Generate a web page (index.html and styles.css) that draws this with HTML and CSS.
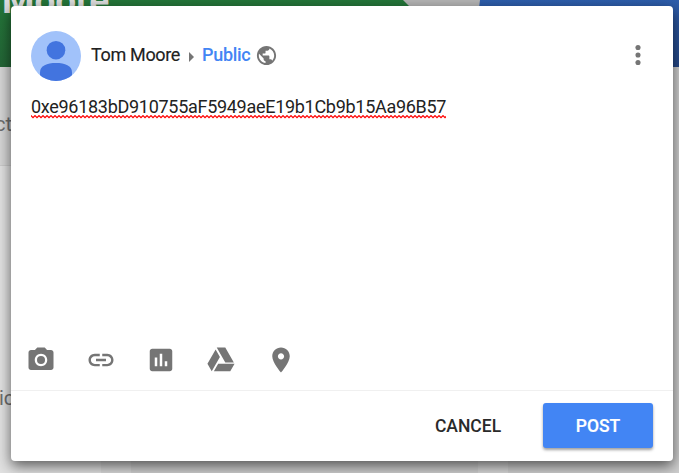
FILE: index.html
```html
<!DOCTYPE html>
<html lang="en">
<head>
<meta charset="utf-8">
<title>New post</title>
<link rel="stylesheet" href="styles.css">
</head>
<body>
<div class="backdrop" aria-hidden="true">
  <div class="banner">
    <svg class="banner-art" width="679" height="67" viewBox="0 0 679 67">
      <defs>
        <linearGradient id="green" x1="0" y1="0" x2="0" y2="1"><stop offset="0" stop-color="#247639"/><stop offset="1" stop-color="#236536"/></linearGradient>
        <linearGradient id="blue" x1="0" y1="0" x2="0" y2="1"><stop offset="0" stop-color="#2d5dab"/><stop offset="1" stop-color="#254888"/></linearGradient>
      </defs>
      <rect width="679" height="67" fill="#b4b4b4"/>
      <path d="M0 0H403L470 67H0Z" fill="url(#green)"/>
      <path d="M480 0H679V67H472Z" fill="url(#blue)"/>
    </svg>
    <span class="banner-name">Moore</span>
  </div>
  <div class="columns">
    <div class="column side">
      <div class="tab">ct</div>
      <div class="card">ic</div>
    </div>
    <div class="gutter"></div>
    <div class="column"></div>
    <div class="gutter"></div>
    <div class="column"></div>
  </div>
</div>
<main class="dialog">
  <header class="head">
    <svg class="avatar" width="50" height="50" viewBox="0 0 50 50">
      <defs><clipPath id="round"><circle cx="25" cy="25" r="25"/></clipPath></defs>
      <g clip-path="url(#round)"><rect width="50" height="50" fill="#a1c2fa"/><circle cx="25" cy="19.2" r="9.3" fill="#4274df"/><path d="M9 50V41.5C9 34.5 16 32 25 32S41 34.5 41 41.5V50Z" fill="#4274df"/></g>
    </svg>
    <span class="author">Tom Moore</span>
    <svg class="caret" width="5" height="10" viewBox="0 0 5 10"><path d="M0 0L5 5L0 10Z" fill="#757575"/></svg>
    <span class="audience">Public</span>
    <svg class="globe" width="23" height="23" viewBox="0 0 24 24"><path fill="#757575" d="M12 2C6.480 2 2 6.480 2 12s4.480 10 10 10 10-4.480 10-10S17.520 2 12 2zm-1 17.930c-3.950-.49-7-3.850-7-7.930 0-.62.080-1.210.21-1.790L9 15v1c0 1.100.9 2 2 2v1.930zm6.900-2.540c-.26-.81-1-1.390-1.900-1.390h-1v-3c0-.55-.45-1-1-1H8v-2h2c.55 0 1-.45 1-1V7h2c1.100 0 2-.9 2-2v-.41c2.930 1.190 5 4.060 5 7.410 0 2.080-.8 3.970-2.100 5.390z"/></svg>
    <svg class="more" width="30" height="30" viewBox="0 0 24 24" fill="#757575"><circle cx="12" cy="6" r="2.050"/><circle cx="12" cy="12" r="2.050"/><circle cx="12" cy="18" r="2.050"/></svg>
  </header>
  <div class="body">
    <div class="entry">0xe96183bD910755aF5949aeE19b1Cb9b15Aa96B57
      <svg class="squiggle" width="415" height="4"><defs><pattern id="wave" width="4" height="4" patternUnits="userSpaceOnUse"><path d="M-1 1.500L0 .7L2 2.700L4 .7L5 1.700" fill="none" stroke="#f00" stroke-width="1.300"/></pattern></defs><rect width="415" height="4" fill="url(#wave)"/></svg>
    </div>
  </div>
  <div class="tools">
    <svg viewBox="0 0 24 24"><circle cx="12" cy="12" r="3.200"/><path d="M9 2L7.170 4H4c-1.100 0-2 .9-2 2v12c0 1.100.9 2 2 2h16c1.100 0 2-.9 2-2V6c0-1.100-.9-2-2-2h-3.170L15 2H9zm3 15c-2.760 0-5-2.240-5-5s2.240-5 5-5 5 2.240 5 5-2.240 5-5 5z"/></svg>
    <svg viewBox="0 0 24 24"><path d="M3.900 12c0-1.710 1.390-3.100 3.100-3.100h4V7H7c-2.760 0-5 2.240-5 5s2.240 5 5 5h4v-1.900H7c-1.710 0-3.100-1.390-3.100-3.100zM8 13h8v-2H8v2zm9-6h-4v1.900h4c1.710 0 3.100 1.390 3.100 3.100s-1.390 3.100-3.100 3.100h-4V17h4c2.760 0 5-2.240 5-5s-2.240-5-5-5z"/></svg>
    <svg viewBox="0 0 24 24"><path d="M19 3H5c-1.100 0-2 .9-2 2v14c0 1.100.9 2 2 2h14c1.100 0 2-.9 2-2V5c0-1.100-.9-2-2-2zM9 17H7v-7h2v7zm4 0h-2V7h2v10zm4 0h-2v-4h2v4z"/></svg>
    <svg viewBox="0 0 24 24"><path d="M7.710 3.500L1.150 15l3.430 6 6.550-11.500L7.710 3.500zM9.730 15L6.300 21h13.120l3.430-6H9.730zM22.280 14L15.420 2H8.580l6.850 12h6.850z"/></svg>
    <svg viewBox="0 0 24 24"><path d="M12 2C8.130 2 5 5.130 5 9c0 5.250 7 13 7 13s7-7.750 7-13c0-3.870-3.130-7-7-7zm0 9.500c-1.380 0-2.500-1.120-2.500-2.500s1.120-2.500 2.500-2.500 2.500 1.120 2.500 2.500-1.120 2.500-2.500 2.500z"/></svg>
  </div>
  <footer class="actions">
    <button class="button">CANCEL</button>
    <button class="button primary">POST</button>
  </footer>
</main>
</body>
</html>
```
FILE: styles.css
```css
* { box-sizing: border-box; }
body {
  margin: 0;
  width: 679px;
  height: 473px;
  overflow: hidden;
  font-family: Roboto, "Liberation Sans", sans-serif;
  background: #c8c8c8;
}
.backdrop {
  position: absolute;
  inset: 0;
  overflow: hidden;
  display: flex;
  flex-direction: column;
}
.banner { height: 67px; flex: none; position: relative; }
.banner-art { display: block; }
.banner-name {
  position: absolute;
  left: 2px;
  top: -18px;
  font-size: 37px;
  line-height: 38px;
  font-weight: 700;
  color: #dcdcdc;
}
.columns { flex: 1; display: flex; }
.column { width: 347px; flex: none; background: #cfcfcf; }
.column.side { width: 101px; color: #6d6d6d; font-size: 20px; }
.gutter { width: 30px; flex: none; background: #d8d8d8; }
.tab { height: 99px; padding-top: 45px; line-height: 24px; text-indent: -5px; background: #d5d5d5; border-bottom: 1px solid #cacaca; }
.card { height: 307px; padding-top: 220px; line-height: 24px; background: #e1e1e1; text-indent: -1px; }
.dialog {
  position: relative;
  display: flex;
  flex-direction: column;
  width: 662px;
  height: 455px;
  margin: 6px 0 0 11px;
  background: #fff;
  border-radius: 4px;
  box-shadow: 0 5px 14px rgba(0, 0, 0, .6);
}
.head { display: flex; align-items: center; height: 50px; margin: 25px 20px 0; }
.author, .audience { font-size: 18px; line-height: 24px; font-weight: 400; margin-top: -2px; letter-spacing: -.34px; -webkit-text-stroke: .15px currentColor; }
.author { margin-left: 10px; color: #212121; }
.caret { margin: 1px 8px 0 9px; }
.audience { color: #4285f4; font-weight: 500; -webkit-text-stroke: 0; }
.globe { margin: -2px 0 0 5px; }
.more { margin: -3px 0 0 auto; }
.body { flex: 1; padding: 14px 20px; font-size: 18px; line-height: 24px; color: #222; }
.entry { position: relative; width: 415px; white-space: nowrap; letter-spacing: -.29px; }
.squiggle { position: absolute; left: 0; top: 20px; }
.tools { display: flex; gap: 30px; height: 60px; padding: 15px 0 0 15px; }
.tools svg { width: 30px; height: 30px; fill: #757575; }
.actions {
  display: flex;
  justify-content: flex-end;
  gap: 20px;
  height: 71px;
  padding: 12px 20px 0;
  border-top: 1px solid #f0f0f0;
}
.button {
  width: 110px;
  height: 45px;
  padding: 1px 0 0;
  border: 0;
  border-radius: 3px;
  background: transparent;
  color: #2a2a2a;
  font: 500 17.5px/44px Roboto, "Liberation Sans", sans-serif;
}
.primary { background: #4285f4; color: #fff; box-shadow: 0 2px 3px rgba(0, 0, 0, .38); -webkit-text-stroke: .2px currentColor; }
```
